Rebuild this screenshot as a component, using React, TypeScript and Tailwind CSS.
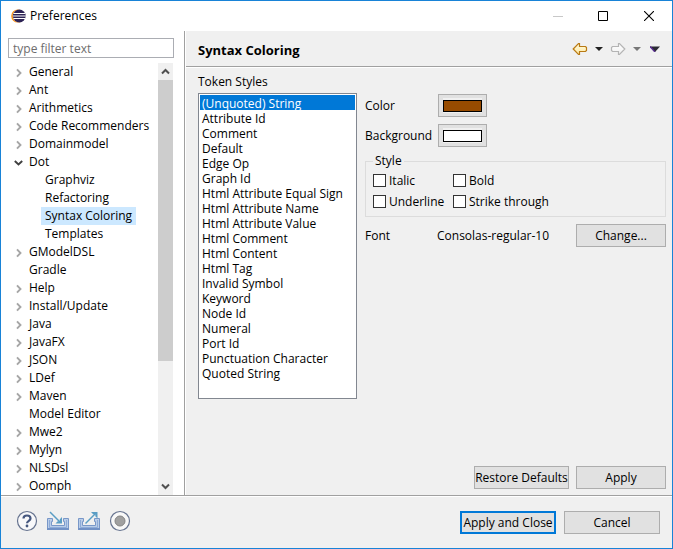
import { useState } from 'react';

type Node = { name: string; kind: 'closed' | 'open' | 'leaf' | 'child' };

const closed = (name: string): Node => ({ name, kind: 'closed' });
const leaf = (name: string): Node => ({ name, kind: 'leaf' });
const child = (name: string): Node => ({ name, kind: 'child' });

const tree: Node[] = [
  closed('General'),
  closed('Ant'),
  closed('Arithmetics'),
  closed('Code Recommenders'),
  closed('Domainmodel'),
  { name: 'Dot', kind: 'open' },
  child('Graphviz'),
  child('Refactoring'),
  child('Syntax Coloring'),
  child('Templates'),
  closed('GModelDSL'),
  leaf('Gradle'),
  closed('Help'),
  closed('Install/Update'),
  closed('Java'),
  closed('JavaFX'),
  closed('JSON'),
  closed('LDef'),
  closed('Maven'),
  leaf('Model Editor'),
  closed('Mwe2'),
  closed('Mylyn'),
  closed('NLSDsl'),
  closed('Oomph'),
];

const tokens = [
  '(Unquoted) String',
  'Attribute Id',
  'Comment',
  'Default',
  'Edge Op',
  'Graph Id',
  'Html Attribute Equal Sign',
  'Html Attribute Name',
  'Html Attribute Value',
  'Html Comment',
  'Html Content',
  'Html Tag',
  'Invalid Symbol',
  'Keyword',
  'Node Id',
  'Numeral',
  'Port Id',
  'Punctuation Character',
  'Quoted String',
];

function EclipseLogo() {
  return (
    <svg width="15" height="14" viewBox="0 0 15 14" aria-hidden="true">
      <circle cx="6.8" cy="7" r="6.6" fill="#f7941e" />
      <circle cx="8" cy="7" r="6.2" fill="#fff" />
      <circle cx="8.3" cy="7" r="6.4" fill="#2c2255" />
      <path d="M2.5 4.5h11.5M2 7h12.8M2.5 9.5h11.5" stroke="#fff" strokeWidth="1" />
    </svg>
  );
}

function TreeArrow({ open }: { open: boolean }) {
  return open ? (
    <svg width="10" height="18" viewBox="0 0 10 18" aria-hidden="true">
      <path d="M0.8 8L4.5 11.5l3.7-3.5" fill="none" stroke="#404040" strokeWidth="1.9" />
    </svg>
  ) : (
    <svg width="10" height="18" viewBox="0 0 10 18" aria-hidden="true">
      <path d="M3 6.3L6.5 10 3 13.7" fill="none" stroke="#a6a6a6" strokeWidth="1.9" />
    </svg>
  );
}

function ScrollChevron({ up }: { up: boolean }) {
  return (
    <svg width="9" height="7" viewBox="0 0 9 7" aria-hidden="true">
      <path d={up ? 'M1 5.5L4.5 2 8 5.5' : 'M1 1.5L4.5 5 8 1.5'} fill="none" stroke="#505050" strokeWidth="2" />
    </svg>
  );
}

function Tree() {
  return (
    <div className="flex">
      <ul role="tree" aria-label="Preference pages" className="flex-1 pl-[6px]">
        {tree.map((n) => (
          <li key={n.name} role="treeitem" aria-selected={n.name === 'Syntax Coloring'} className="flex h-[18px] leading-[18px]">
            {n.kind === 'child' ? (
              <span className="w-[27px]" />
            ) : (
              <span className="w-[11px]">{n.kind !== 'leaf' && <TreeArrow open={n.kind === 'open'} />}</span>
            )}
            <span className={n.name === 'Syntax Coloring' ? 'bg-[#cce8ff] px-1' : 'px-1'}>{n.name}</span>
          </li>
        ))}
      </ul>
      <div className="mr-px flex w-[15px] flex-col bg-[#f0f0f0]">
        <button aria-label="Scroll up" className="flex h-[17px] items-center justify-center">
          <ScrollChevron up />
        </button>
        <div className="h-[281px] bg-[#cdcdcd]" />
        <button aria-label="Scroll down" className="mt-auto flex h-[17px] items-center justify-center">
          <ScrollChevron up={false} />
        </button>
      </div>
    </div>
  );
}

function NavArrow({ back }: { back: boolean }) {
  return (
    <svg width="16" height="14" viewBox="0 0 16 14" aria-hidden="true">
      <defs>
        <linearGradient id={back ? 'gold' : 'grey'} x1="0" y1="0" x2="0" y2="1">
          <stop offset="0" stopColor={back ? '#fffbe0' : '#ffffff'} />
          <stop offset="1" stopColor={back ? '#ffe9a0' : '#f0f0f0'} />
        </linearGradient>
      </defs>
      <path
        d={
          back
            ? 'M1.2 7L6.5 1.5H7.5V4.5H13.5L14.5 5.5V8.5L13.5 9.5H7.5V12.5H6.5Z'
            : 'M14.8 7L9.5 1.5H8.5V4.5H2.5L1.5 5.5V8.5L2.5 9.5H8.5V12.5H9.5Z'
        }
        fill={back ? 'url(#gold)' : 'url(#grey)'}
        stroke={back ? '#b97a14' : '#b4b4b4'}
        strokeWidth="1.2"
      />
    </svg>
  );
}

function Triangle({ color, wide }: { color: string; wide?: boolean }) {
  return wide ? (
    <svg width="10" height="6" viewBox="0 0 10 6" aria-hidden="true">
      <path d="M0 0.5H10L5 6Z" fill={color} />
      <path d="M0 0.5L5 6" stroke="#5a2d91" strokeWidth="1.4" />
    </svg>
  ) : (
    <svg width="8" height="4" viewBox="0 0 8 4" aria-hidden="true">
      <path d="M0 0H8L4 4Z" fill={color} />
    </svg>
  );
}

const btn = 'border border-[#adadad] bg-[#e1e1e1] text-center leading-[21px]';

function Swatch({ id, color }: { id: string; color: string }) {
  return (
    <button id={id} className="flex h-[23px] w-[49px] items-center justify-center border border-[#adadad] bg-[#e1e1e1]">
      <span className="bg-[#f0f0f0] pt-0.5 pb-px">
        <span className={'block h-3 w-[39px] border border-black ' + color} />
      </span>
    </button>
  );
}

function Check({ label }: { label: string }) {
  return (
    <label className="flex h-[21px] items-center gap-[3px]">
      <input type="checkbox" className="size-[13px] appearance-none border border-[#333] bg-white checked:bg-[#0078d7]" />
      {label}
    </label>
  );
}

function FooterTray({ out }: { out: boolean }) {
  return (
    <svg width="22" height="20" viewBox="0 0 22 20" aria-hidden="true">
      <path d="M0.5 7.5H5.5V10.5H4.5V14.5H17.5V10.5H16.5V7.5H21.5V18.5H0.5Z" fill="#b9cde8" stroke="#7897c8" />
      <path d="M2.5 9V16.5H19.5V9" fill="none" stroke="#8eabd8" />
      <path d="M0 18H22" stroke="#7292c6" strokeWidth="2" />
      {out ? (
        <g>
          <path d="M7.5 12.5L18 2" stroke="#5a9dc4" strokeWidth="1.5" />
          <path d="M13 1H19.5V7.5L17.3 5.3V3.2H15.2Z" fill="#5a9dc4" />
        </g>
      ) : (
        <g>
          <path d="M3 1L13 11" stroke="#5a9dc4" strokeWidth="1.5" />
          <path d="M8.5 12.5H15V6L12.8 8.2V10.3H10.7Z" fill="#5a9dc4" />
        </g>
      )}
    </svg>
  );
}

export default function App() {
  const [token, setToken] = useState(tokens[0]);
  return (
    <div className="flex min-h-screen flex-col border border-[#1883d7] bg-[#f0f0f0] font-['Open_Sans','Noto_Sans',sans-serif] text-[12px] leading-[18px] text-black">
      <header className="flex h-[30px] items-center bg-white pl-[10px]">
        <EclipseLogo />
        <h1 className="ml-1 flex-1">Preferences</h1>
        <button aria-label="Minimize" className="flex w-[45px] justify-center">
          <svg width="10" height="10" viewBox="0 0 10 10"><path d="M0 5.5H10" stroke="#c8c8c8" /></svg>
        </button>
        <button aria-label="Maximize" className="flex w-[45px] justify-center">
          <svg width="10" height="10" viewBox="0 0 10 10"><path d="M.5 .5H9.5V9.5H.5Z" fill="none" stroke="#000" /></svg>
        </button>
        <button aria-label="Close" className="flex w-[47px] justify-center">
          <svg width="10" height="10" viewBox="0 0 10 10"><path d="M0 0L10 10M10 0L0 10" stroke="#000" strokeWidth="1.1" /></svg>
        </button>
      </header>

      <div className="flex flex-1 border-b border-[#a0a0a0]">
        <aside className="w-[183px] bg-white pt-[7px] pr-[10px] pl-[7px]">
          <input
            type="text"
            aria-label="Filter"
            placeholder="type filter text"
            className="mb-[5px] block h-5 w-full border border-[#abadb3] px-1 placeholder:text-[#6d6d6d] placeholder:opacity-100"
          />
          <Tree />
        </aside>

        <main className="flex flex-1 flex-col border-l border-[#a0a0a0] shadow-[inset_1px_0_0_#fff]">
          <div className="ml-px flex h-9 items-center border-b border-[#a0a0a0] pr-3 pl-3 shadow-[0_1px_0_#fff]">
            <h2 className="flex-1 pt-0.5 text-[13px] font-bold">Syntax Coloring</h2>
            <div className="flex items-center">
              <button aria-label="Back"><NavArrow back /></button>
              <button aria-label="Back history" className="ml-[7px]"><Triangle color="#222" /></button>
              <button aria-label="Forward" className="ml-[7px]"><NavArrow back={false} /></button>
              <button aria-label="Forward history" className="ml-[7px]"><Triangle color="#777" /></button>
              <button aria-label="View menu" className="ml-[9px]"><Triangle color="#2b2b33" wide /></button>
            </div>
          </div>

          <div className="flex flex-1 gap-2 pt-[6px] pr-[6px] pl-[13px]">
            <div className="w-[159px]">
              <label htmlFor="tokens" className="mb-0.5 block">Token Styles</label>
              <select
                id="tokens"
                size={19}
                value={token}
                onChange={(e) => setToken(e.target.value)}
                className="block h-[306px] w-full appearance-none overflow-hidden border border-[#828790] bg-white p-px"
              >
                {tokens.map((t) => (
                  <option
                    key={t}
                    className="block h-[15px] min-h-0 px-0.5 py-0 leading-[13px] checked:bg-[#0078d7] checked:bg-linear-to-r checked:from-[#0078d7] checked:to-[#0078d7] checked:[-webkit-text-fill-color:#fff]"
                  >
                    {t}
                  </option>
                ))}
              </select>
            </div>

            <div className="flex-1 pt-[21px]">
              <div className="grid grid-cols-[73px_auto] items-center justify-start gap-y-[7px]">
                <label htmlFor="fg">Color</label>
                <Swatch id="fg" color="bg-[#974b00]" />
                <label htmlFor="bg">Background</label>
                <Swatch id="bg" color="bg-white" />
              </div>

              <fieldset className="mt-[5px] border border-[#dcdcdc] pb-1 pl-[7px]">
                <legend className="px-0.5 leading-[18px]">Style</legend>
                <div className="grid grid-cols-[80px_auto] justify-start">
                  <Check label="Italic" />
                  <Check label="Bold" />
                  <Check label="Underline" />
                  <Check label="Strike through" />
                </div>
              </fieldset>

              <div className="mt-[7px] flex items-center">
                <span className="w-[72px]">Font</span>
                <span className="flex-1">Consolas-regular-10</span>
                <button className={btn + ' w-[90px]'}>Change...</button>
              </div>
            </div>
          </div>

          <div className="flex justify-end gap-[7px] pr-[6px] pb-[6px]">
            <button className={btn + ' w-[95px]'}>Restore Defaults</button>
            <button className={btn + ' w-[90px]'}>Apply</button>
          </div>
        </main>
      </div>

      <footer className="flex h-[52px] items-center border-t border-white pr-3 pl-[15px]">
        <div className="flex items-center gap-[9px] pb-[3px]">
          <button aria-label="Help">
            <svg width="22" height="22" viewBox="0 0 22 22">
              <circle cx="11" cy="11" r="9.5" fill="#f8f8fa" stroke="#66738f" strokeWidth="1.2" />
              <path d="M7.5 8.5C7.5 4.5 14.5 4.5 14.5 8.5C14.5 10.8 11 10.8 11 13.3" fill="none" stroke="#45577f" strokeWidth="2.2" />
              <circle cx="11" cy="16" r="1.4" fill="#45577f" />
            </svg>
          </button>
          <button aria-label="Import"><FooterTray out={false} /></button>
          <button aria-label="Export"><FooterTray out /></button>
          <button aria-label="Record preferences">
            <svg width="22" height="22" viewBox="0 0 22 22">
              <circle cx="11" cy="11" r="9.5" fill="#f8f8f8" stroke="#66738f" strokeWidth="1.2" />
              <circle cx="11" cy="11" r="5" fill="#a0a0a0" stroke="#848484" />
            </svg>
          </button>
        </div>
        <div className="ml-auto flex gap-2">
          <button className="w-24 border-2 border-[#0078d7] bg-[#e1e1e1] text-center leading-[19px]">Apply and Close</button>
          <button className={btn + ' w-24'}>Cancel</button>
        </div>
      </footer>
    </div>
  );
}
